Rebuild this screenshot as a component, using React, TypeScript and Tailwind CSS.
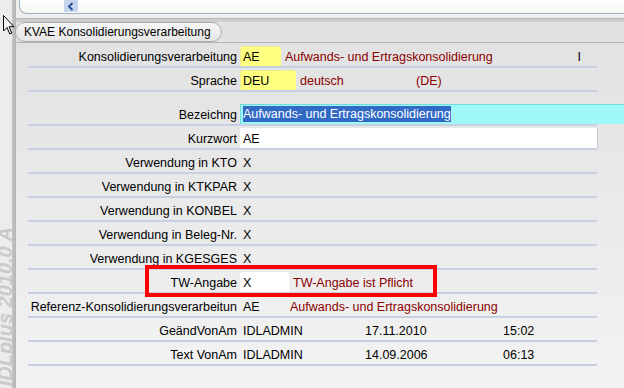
import React from "react";

function Row({ label, children }: { label: string; children?: React.ReactNode }) {
  return (
    <div className="flex h-[24px] items-end border-b-2 border-[#c6d0e4]">
      <div className="w-[209px] shrink-0 overflow-hidden whitespace-nowrap pb-[1px] text-right leading-[16px]">{label}</div>
      <div className="ml-[3px] flex flex-1 items-end whitespace-nowrap">{children}</div>
    </div>
  );
}

function Val({ children, className = "" }: { children: React.ReactNode; className?: string }) {
  return <span className={`pb-[1px] leading-[16px] ${className}`}>{children}</span>;
}

export default function App() {
  return (
    <div
      className="relative flex h-[388px] w-[624px] overflow-hidden bg-[#e6e6e6] text-[12.5px] text-black"
      style={{ fontFamily: '"Liberation Sans", Arial, sans-serif' }}
    >
      {/* left strip with product name */}
      <div className="relative w-[12px] shrink-0 overflow-hidden bg-[#ececec]">
        <span className="absolute left-[-4px] top-[227px] rotate-180 whitespace-nowrap text-[20px] font-bold italic leading-[18px] text-[#cacaca] [writing-mode:vertical-rl]">
          IDLplus 2010.0 A
        </span>
      </div>
      <div className="w-[4px] shrink-0 bg-gradient-to-r from-[#c4c4c4] to-[#b4b4b4]" />

      <div className="flex flex-1 flex-col">
        {/* top panel */}
        <div className="flex h-[14px] bg-[#ededed]">
          <div className="ml-[3px] flex-1 rounded-bl-[8px] border-b border-l border-[#9fb2c6] bg-gradient-to-b from-white to-[#f6f6f2]">
            <div className="ml-[44px] flex h-[12px] w-[14px] items-center justify-center bg-[#c6d6ef]">
              <svg width="8" height="9" viewBox="0 0 8 9">
                <path d="M5.5 1 L2 4.5 L5.5 8" fill="none" stroke="#2a4f9c" strokeWidth="2" />
              </svg>
            </div>
          </div>
        </div>
        <div className="h-[4px] bg-[#ededed]" />
        <div className="h-[1px] bg-[#b6b6b6]" />
        <div className="h-[3px] bg-[#cdcdcd]" />
        <div className="flex h-[20px] items-end bg-[#e2e2e2]">
          <div className="-ml-[1px] flex h-[20px] w-[207px] items-center rounded-[10px] border border-[#a9a9a9] bg-gradient-to-b from-[#f6f6f6] to-[#e6e6e6] pl-[8px] text-[12px]">
            KVAE Konsolidierungsverarbeitung
          </div>
        </div>

        {/* content */}
        <div className="flex-1 border-t border-[#b2b2b2] bg-gradient-to-b from-[#e2e2e2] to-[#f3f3f3] pt-[1px]">
          <div className="ml-[12px] w-[569px]">
            <Row label="Konsolidierungsverarbeitung">
              <div className="flex h-[20px] w-[41px] items-end rounded-t-[3px] border-l border-t border-[#eeee9a] bg-[#ffff80] pl-[2px]">
                <Val>AE</Val>
              </div>
              <Val className="ml-[4px] text-[#8a0000]">Aufwands- und Ertragskonsolidierung</Val>
              <Val className="ml-auto mr-[16px]">I</Val>
            </Row>
            <Row label="Sprache">
              <div className="flex h-[20px] w-[56px] items-end rounded-t-[3px] border-l border-t border-[#eeee9a] bg-[#ffff80] pl-[2px]">
                <Val>DEU</Val>
              </div>
              <Val className="ml-[4px] inline-block w-[116px] text-[#8a0000]">deutsch</Val>
              <Val className="text-[#8a0000]">(DE)</Val>
            </Row>
            <div className="h-[10px]" />
            <Row label="Bezeichng">
              <div className="flex h-[20px] w-[384px] shrink-0 items-end border-l border-t border-[#74dcdc] bg-[#a0f7f7] pl-[2px]">
                <span className="mb-[2px] inline-block bg-[#316ac5] leading-[16px] text-white">Aufwands- und Ertragskonsolidierung</span>
              </div>
            </Row>
            <Row label="Kurzwort">
              <div className="flex h-[20px] w-[358px] items-end border-r border-[#c4c4c4] bg-white pl-[3px]">
                <Val>AE</Val>
              </div>
            </Row>
            <Row label="Verwendung in KTO">
              <Val className="ml-[3px]">X</Val>
            </Row>
            <Row label="Verwendung in KTKPAR">
              <Val className="ml-[3px]">X</Val>
            </Row>
            <Row label="Verwendung in KONBEL">
              <Val className="ml-[3px]">X</Val>
            </Row>
            <Row label="Verwendung in Beleg-Nr.">
              <Val className="ml-[3px]">X</Val>
            </Row>
            <Row label="Verwendung in KGESGES">
              <Val className="ml-[3px]">X</Val>
            </Row>
            <Row label="TW-Angabe">
              <div className="flex h-[20px] w-[49px] items-end rounded-t-[3px] bg-white pl-[3px]">
                <Val>X</Val>
              </div>
              <Val className="ml-[4px] text-[#8a0000]">TW-Angabe ist Pflicht</Val>
            </Row>
            <Row label="Referenz-Konsolidierungsverarbeitun">
              <Val className="ml-[3px] inline-block w-[47px]">AE</Val>
              <Val className="text-[#8a0000]">Aufwands- und Ertragskonsolidierung</Val>
            </Row>
            <Row label="GeändVonAm">
              <Val className="ml-[3px] inline-block w-[122px]">IDLADMIN</Val>
              <Val className="inline-block w-[138px]">17.11.2010</Val>
              <Val>15:02</Val>
            </Row>
            <Row label="Text VonAm">
              <Val className="ml-[3px] inline-block w-[122px]">IDLADMIN</Val>
              <Val className="inline-block w-[138px]">14.09.2006</Val>
              <Val>06:13</Val>
            </Row>
          </div>
        </div>
      </div>

      {/* red highlight box */}
      <div className="absolute left-[145px] top-[265px] h-[32px] w-[292px] border-4 border-[#ff0000]" />

      {/* mouse pointer */}
      <svg className="absolute left-[3px] top-[15px]" width="12" height="21" viewBox="0 0 12 21">
        <path d="M0.5 0.5 L0.5 16 L4 12.5 L6.8 19 L8.8 18.1 L6.1 11.7 L11 11.7 Z" fill="#f4f4f4" stroke="#000" strokeWidth="1" />
      </svg>
    </div>
  );
}
